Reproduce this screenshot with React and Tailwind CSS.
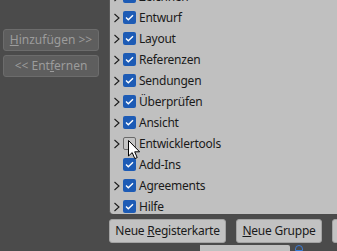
import React from "react";

const items = [
  { label: "Zeichnen", chev: true, checked: true },
  { label: "Entwurf", chev: true, checked: true },
  { label: "Layout", chev: true, checked: true },
  { label: "Referenzen", chev: true, checked: true },
  { label: "Sendungen", chev: true, checked: true },
  { label: "Überprüfen", chev: true, checked: true },
  { label: "Ansicht", chev: true, checked: true },
  { label: "Entwicklertools", chev: true, checked: false },
  { label: "Add-Ins", chev: false, checked: true },
  { label: "Agreements", chev: true, checked: true },
  { label: "Hilfe", chev: true, checked: true },
];

function Chevron() {
  return (
    <svg width="8" height="10" viewBox="0 0 8 10" className="shrink-0">
      <polyline points="1.5,1 6,5 1.5,9" fill="none" stroke="#1a1a1a" strokeWidth="1.1" />
    </svg>
  );
}

function Check({ checked }) {
  if (!checked)
    return (
      <div className="w-[13px] h-[13px] rounded-[2px] border border-[#6a6a6a] bg-[#c4c4c4] shrink-0" />
    );
  return (
    <div className="w-[13px] h-[13px] rounded-[2px] bg-[#1d5bb5] shrink-0 flex items-center justify-center">
      <svg width="9" height="7" viewBox="0 0 9 7">
        <polyline points="1,3.6 3.3,5.8 8,1.2" fill="none" stroke="#ffffff" strokeWidth="1.4" />
      </svg>
    </div>
  );
}

export default function App() {
  return (
    <div
      className="w-[337px] h-[251px] bg-[#4b4b4b] relative overflow-hidden flex text-[12px] tracking-[-0.25px] text-[#1a1a1a]"
      style={{ fontFamily: '"Noto Sans", "Open Sans", sans-serif' }}
    >
      <div className="w-[109px] shrink-0 flex flex-col gap-[4px] pt-[29px] pl-[3px] pr-[10px]">
        <div className="h-[22px] w-[96px] rounded-[3px] border border-[#6c6c6c] bg-[#5e5e5e] text-[#9c9c9c] tracking-normal flex items-center justify-center">
          <span><span className="underline">H</span>inzufügen &gt;&gt;</span>
        </div>
        <div className="h-[22px] w-[96px] rounded-[3px] border border-[#6c6c6c] bg-[#5e5e5e] text-[#9c9c9c] tracking-normal flex items-center justify-center">
          <span>&lt;&lt; Ent<span className="underline">f</span>ernen</span>
        </div>
      </div>
      <div className="flex-1 flex flex-col">
        <div className="h-[217px] bg-[#c0c0c0] rounded-bl-[4px] overflow-hidden border-l border-[#595959]">
          <div className="flex flex-col mt-[-14px]">
            {items.map((it) => (
              <div key={it.label} className="h-[21px] flex items-center">
                <div className="w-[13px] pl-[3px] flex items-center">{it.chev ? <Chevron /> : null}</div>
                <Check checked={it.checked} />
                <span className="ml-[3px] leading-none">{it.label}</span>
              </div>
            ))}
          </div>
        </div>
        <div className="flex gap-[10px] mt-[5px]">
          <div className="h-[24px] w-[117px] shrink-0 rounded-[3px] border border-[#a3a3a3] bg-[#c2c2c2] flex items-center justify-center">
            <span>Neue <span className="underline">R</span>egisterkarte</span>
          </div>
          <div className="h-[24px] w-[86px] shrink-0 rounded-[3px] border border-[#a3a3a3] bg-[#c2c2c2] flex items-center justify-center">
            <span><span className="underline">N</span>eue Gruppe</span>
          </div>
          <div className="h-[24px] w-[40px] shrink-0 rounded-[3px] border border-[#a3a3a3] bg-[#c2c2c2]" />
        </div>
        <div className="flex items-start mt-[2px] pl-[91px]">
          <div className="h-[6px] w-[90px] bg-[#c0c0c0] rounded-tr-[2px]" />
          <div className="ml-[5px] w-[8px] h-[6px] rounded-t-full border border-[#3a7bd5]" />
        </div>
      </div>
      <svg
        className="absolute left-[128px] top-[140px]"
        width="13"
        height="20"
        viewBox="0 0 13 20"
      >
        <path
          d="M0.5,0.5 L0.5,16 L4.2,12.6 L6.8,18.6 L9.2,17.6 L6.7,11.8 L11.6,11.8 Z"
          fill="#ffffff"
          stroke="#000000"
          strokeWidth="1"
          strokeLinejoin="round"
        />
      </svg>
    </div>
  );
}
